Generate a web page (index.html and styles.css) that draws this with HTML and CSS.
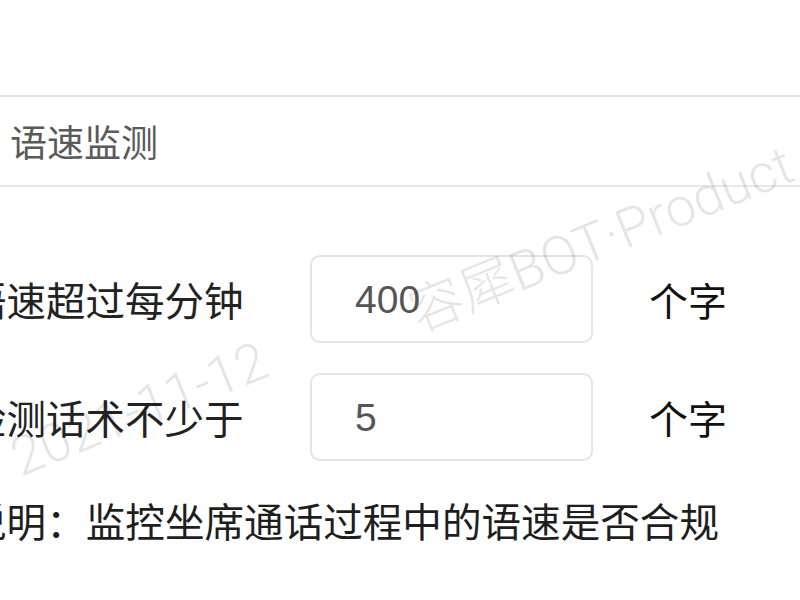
FILE: index.html
```html
<!DOCTYPE html>
<html lang="zh">
<head>
<meta charset="utf-8">
<title>语速监测</title>
<link rel="stylesheet" href="styles.css">
</head>
<body>
<div class="page">
  <div class="top-space"></div>
  <div class="header">
    <span class="title">语速监测</span>
  </div>
  <div class="form">
    <div class="row first">
      <span class="label">语速超过每分钟</span>
      <div class="input"><span class="value">400</span></div>
      <span class="unit">个字</span>
    </div>
    <div class="row">
      <span class="label">检测话术不少于</span>
      <div class="input"><span class="value">5</span></div>
      <span class="unit">个字</span>
    </div>
    <div class="desc">说明：监控坐席通话过程中的语速是否合规</div>
  </div>
  <span class="wm wm-brand">容犀BOT·Product</span>
  <span class="wm wm-date">2021-11-12</span>
</div>
</body>
</html>
```

FILE: styles.css
```css
html, body {
  margin: 0;
  padding: 0;
  background: #ffffff;
}
.page {
  position: relative;
  width: 800px;
  height: 600px;
  overflow: hidden;
  font-family: "Noto Sans CJK SC", "Noto Sans", sans-serif;
}
.top-space {
  height: 95px;
}
.header {
  height: 88px;
  border-top: 2px solid #e3e3e3;
  border-bottom: 2px solid #e8e8e8;
  display: flex;
  align-items: center;
  padding-left: 10px;
}
.title {
  font-size: 37px;
  color: #5a5a5a;
  line-height: 1;
}
.form {
  margin-left: -33px;
  padding-top: 68px;
}
.row {
  display: flex;
  align-items: center;
  height: 88px;
  margin-bottom: 30px;
}
.label {
  width: 343px;
  flex: none;
  font-size: 39.5px;
  color: #222222;
  line-height: 1;
  white-space: nowrap;
}
.input {
  width: 283px;
  height: 88px;
  box-sizing: border-box;
  border: 2px solid #e4e4e4;
  border-radius: 10px;
  display: flex;
  align-items: center;
  padding-left: 43px;
  flex: none;
}
.value {
  font-family: "Liberation Sans", Arial, sans-serif;
  font-size: 39px;
  color: #555555;
  line-height: 1;
}
.unit {
  margin-left: 56px;
  font-size: 39px;
  color: #111111;
  line-height: 1;
}
.desc {
  margin-top: -1px;
  font-size: 39.6px;
  line-height: 60px;
  color: #1e1e1e;
  white-space: nowrap;
}
.wm {
  position: absolute;
  font-family: Roboto, "Noto Sans CJK SC", sans-serif;
  font-weight: 300;
  font-size: 54px;
  line-height: 1;
  color: rgba(0, 0, 0, 0.1);
  white-space: nowrap;
  transform-origin: 0 100%;
  transform: rotate(-22deg);
  pointer-events: none;
}
.wm-brand {
  left: 422px;
  top: 287px;
}
.wm-date {
  left: 24px;
  top: 431px;
}
```
